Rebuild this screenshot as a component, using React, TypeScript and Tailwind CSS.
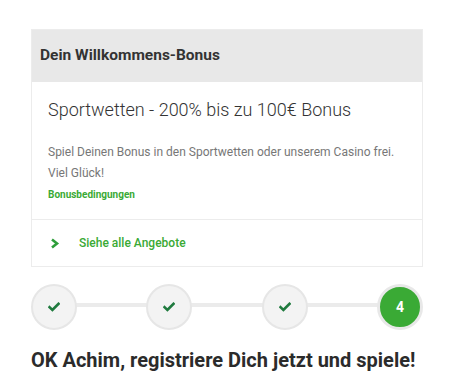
import React from "react";

function Check() {
  return (
    <svg width="12" height="10" viewBox="0 0 12 10">
      <path d="M1.5 5.2 L4.4 8 L10.5 1.8" fill="none" stroke="#1f7a3e" strokeWidth="2.6" strokeLinecap="square" />
    </svg>
  );
}

export default function App() {
  return (
    <div className="w-[455px] h-[384px] bg-white" style={{ fontFamily: "Roboto, 'Liberation Sans', sans-serif" }}>
      <div className="pt-[29px] pl-[31px] w-[423px]">
        <div className="border border-[#ececec]">
          <div className="h-[52px] bg-[#e8e8e8] flex items-center px-[8px] text-[15.5px] font-bold text-[#333]">
            Dein Willkommens-Bonus
          </div>
          <div className="px-[16px] pt-[16px] pb-[17px] border-b border-[#ececec]">
            <div className="text-[18px] leading-[24px] font-light text-[#333]">Sportwetten - 200% bis zu 100€ Bonus</div>
            <div className="mt-[20px] text-[12px] leading-[21px] text-[#777]">
              Spiel Deinen Bonus in den Sportwetten oder unserem Casino frei.
              <br />
              Viel Glück!
            </div>
            <div className="mt-[4px] text-[10px] leading-[14px] font-bold text-[#3aaa35]">Bonusbedingungen</div>
          </div>
          <div className="h-[46px] flex items-center pl-[18px]">
            <svg width="10" height="11" viewBox="0 0 10 11">
              <path d="M2 1.5 L7 5.5 L2 9.5" fill="none" stroke="#2e9e3a" strokeWidth="2.6" />
            </svg>
            <span className="ml-[19px] text-[12px] font-medium text-[#3aaa35]">Siehe alle Angebote</span>
          </div>
        </div>
        <div className="relative mt-[17px] flex justify-between items-center">
          <div className="absolute left-[40px] right-[40px] top-[19px] h-[4px] bg-[#ebebeb]" />
          {[0, 1, 2].map((i) => (
            <div key={i} className="relative w-[46px] h-[46px] rounded-full border-2 border-[#e6e6e6] bg-[#f3f3f3] flex items-center justify-center">
              <Check />
            </div>
          ))}
          <div className="relative w-[46px] h-[46px] rounded-full border-[3px] border-[#e8e8e8] bg-[#3aaa35] flex items-center justify-center text-white text-[14px] font-bold">
            4
          </div>
        </div>
        <div className="mt-[18px] text-[20px] leading-[24px] font-bold text-[#2b2b2b] whitespace-nowrap">
          OK Achim, registriere Dich jetzt und spiele!
        </div>
      </div>
    </div>
  );
}
